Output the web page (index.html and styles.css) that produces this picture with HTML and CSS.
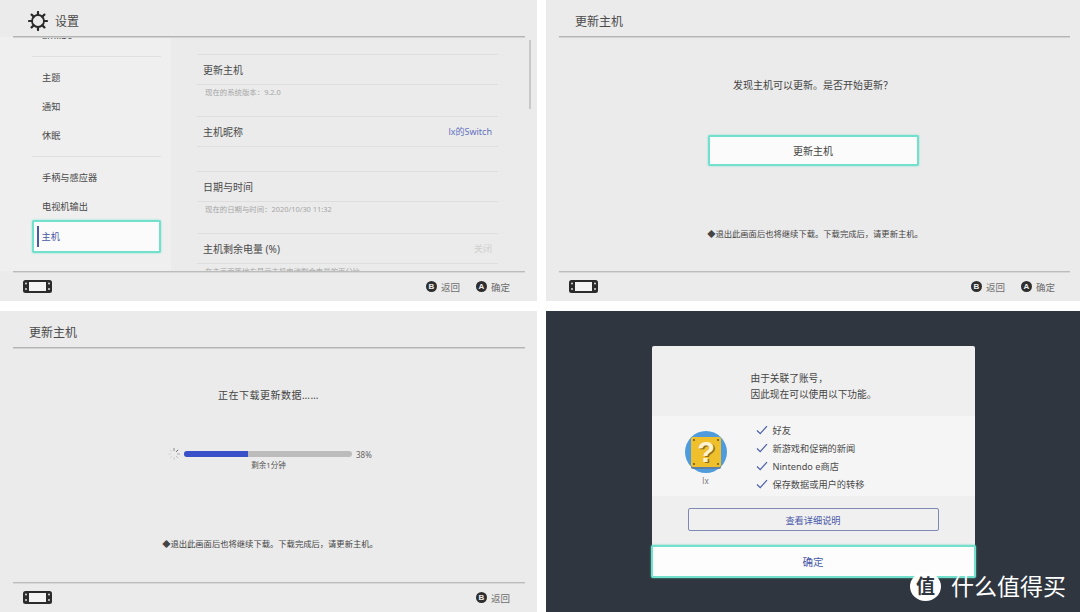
FILE: index.html
```html
<!DOCTYPE html>
<html lang="zh-CN">
<head>
    <meta charset="UTF-8">
    <title>Switch 更新主机</title>
    <link rel="stylesheet" href="styles.css">
</head>
<body>
    <svg class="defs" width="0" height="0">
        <symbol id="console" viewBox="0 0 29 13">
            <rect width="29" height="13" rx="2.5" fill="#2b2b2b"/>
            <rect x="6" y="2" width="17" height="9" fill="#f4f4f4"/>
            <circle cx="3" cy="3.5" r="1" fill="#ddd"/>
            <circle cx="3" cy="9" r="1" fill="#ddd"/>
            <circle cx="26" cy="3.5" r="1" fill="#ddd"/>
            <circle cx="26" cy="9" r="1" fill="#ddd"/>
        </symbol>
        <symbol id="check" viewBox="0 0 12 10">
            <path d="M1 5.5 4.2 8.6 11 1.2" fill="none" stroke="#4a5fa8" stroke-width="1.2"/>
        </symbol>
    </svg>

    <section class="panel settings">
        <header class="panel-head">
            <svg class="gear" viewBox="0 0 20 20">
                <circle cx="10" cy="10" r="6" fill="none" stroke="#2a2a2a" stroke-width="1.8"/>
                <path d="M10 1v3M10 16v3M1 10h3M16 10h3M3.6 3.6l2.2 2.2M14.2 14.2l2.2 2.2M3.6 16.4l2.2-2.2M14.2 5.8l2.2-2.2" stroke="#2a2a2a" stroke-width="2.2" stroke-linecap="round"/>
            </svg>
            <span>设置</span>
        </header>
        <div class="panel-body settings-body">
            <nav class="side">
                <div class="side-item side-cut">amiibo</div>
                <div class="side-group">
                    <div class="side-item">主题</div>
                    <div class="side-item">通知</div>
                    <div class="side-item">休眠</div>
                </div>
                <div class="side-group">
                    <div class="side-item">手柄与感应器</div>
                    <div class="side-item">电视机输出</div>
                    <div class="side-item side-active"><i></i>主机</div>
                </div>
            </nav>
            <div class="options">
                <div class="opt-row">更新主机</div>
                <div class="opt-note">现在的系统版本：9.2.0</div>
                <div class="opt-row opt-gap">主机昵称<span class="opt-value">lx的Switch</span></div>
                <div class="opt-row">日期与时间</div>
                <div class="opt-note">现在的日期与时间：2020/10/30 11:32</div>
                <div class="opt-row">主机剩余电量 (%)<span class="opt-value opt-off">关闭</span></div>
                <div class="opt-note">在主画面等地方显示主机电池剩余电量的百分比</div>
            </div>
            <div class="scrollbar"></div>
        </div>
        <footer class="panel-foot">
            <svg class="console"><use href="#console"/></svg>
            <div class="hints">
                <span class="hint"><b>B</b>返回</span>
                <span class="hint"><b>A</b>确定</span>
            </div>
        </footer>
    </section>

    <section class="panel update-ask">
        <header class="panel-head"><span>更新主机</span></header>
        <div class="panel-body center">
            <p class="msg msg-ask">发现主机可以更新。是否开始更新？</p>
            <button class="focus-btn">更新主机</button>
            <p class="note note-ask">◆退出此画面后也将继续下载。下载完成后，请更新主机。</p>
        </div>
        <footer class="panel-foot">
            <svg class="console"><use href="#console"/></svg>
            <div class="hints">
                <span class="hint"><b>B</b>返回</span>
                <span class="hint"><b>A</b>确定</span>
            </div>
        </footer>
    </section>

    <section class="panel update-run">
        <header class="panel-head"><span>更新主机</span></header>
        <div class="panel-body center">
            <p class="msg msg-run">正在下载更新数据……</p>
            <div class="progress">
                <svg class="spinner" viewBox="0 0 14 14">
                    <path d="M7 1v3" stroke="#8a8a8a"/>
                    <path d="M11.2 2.8 9.1 4.9" stroke="#666"/>
                    <path d="M13 7h-3" stroke="#aaa"/>
                    <path d="M11.2 11.2 9.1 9.1" stroke="#bbb"/>
                    <path d="M7 13v-3" stroke="#ccc"/>
                    <path d="M2.8 11.2l2.1-2.1" stroke="#d2d2d2"/>
                    <path d="M1 7h3" stroke="#d6d6d6"/>
                    <path d="M2.8 2.8l2.1 2.1" stroke="#d0d0d0"/>
                </svg>
                <div class="bar"><div class="bar-fill" style="width: 38%"></div></div>
                <span class="percent">38%</span>
            </div>
            <p class="remain">剩余1分钟</p>
            <p class="note note-run">◆退出此画面后也将继续下载。下载完成后，请更新主机。</p>
        </div>
        <footer class="panel-foot">
            <svg class="console"><use href="#console"/></svg>
            <div class="hints">
                <span class="hint"><b>B</b>返回</span>
            </div>
        </footer>
    </section>

    <section class="panel dark">
        <div class="card">
            <div class="card-intro">
                <p>由于关联了账号，</p>
                <p>因此现在可以使用以下功能。</p>
            </div>
            <div class="card-band">
                <div class="user">
                    <svg class="avatar" viewBox="0 0 42 42">
                        <circle cx="21" cy="21" r="21" fill="#4f9bdc"/>
                        <rect x="6" y="9" width="30" height="29" rx="2" fill="#5f7fa3"/>
                        <rect x="6" y="6" width="30" height="30" rx="2" fill="#f0bf2c"/>
                        <circle cx="9" cy="9" r="1" fill="#6b5320"/>
                        <circle cx="33" cy="9" r="1" fill="#6b5320"/>
                        <circle cx="9" cy="33" r="1" fill="#6b5320"/>
                        <circle cx="33" cy="33" r="1" fill="#6b5320"/>
                        <text class="block-mark-shade" x="22.5" y="32" text-anchor="middle">?</text>
                        <text class="block-mark" x="21" y="31" text-anchor="middle">?</text>
                    </svg>
                    <span class="user-name">lx</span>
                </div>
                <ul class="features">
                    <li><svg class="check"><use href="#check"/></svg>好友</li>
                    <li><svg class="check"><use href="#check"/></svg>新游戏和促销的新闻</li>
                    <li><svg class="check"><use href="#check"/></svg>Nintendo e商店</li>
                    <li><svg class="check"><use href="#check"/></svg>保存数据或用户的转移</li>
                </ul>
            </div>
            <button class="detail-btn">查看详细说明</button>
            <button class="ok-btn">确定</button>
        </div>
        <div class="watermark">
            <span class="wm-badge">值</span>
            <span class="wm-text">什么值得买</span>
        </div>
    </section>
</body>
</html>
```

FILE: styles.css
```css
* {
    box-sizing: border-box;
}

body {
    margin: 0;
    width: 1080px;
    height: 612px;
    overflow: hidden;
    background-color: #fff;
    font-family: "Noto Sans", "Noto Sans CJK SC", sans-serif;
    color: #444;
    display: grid;
    grid-template-columns: 537px 534px;
    grid-template-rows: 301px 301px;
    column-gap: 9px;
    row-gap: 10px;
}

p {
    margin: 0;
}

button {
    display: block;
    font-family: inherit;
    padding: 0;
}

.defs {
    position: absolute;
}

.panel {
    background-color: #ebebeb;
    display: flex;
    flex-direction: column;
    position: relative;
    overflow: hidden;
}

.panel-head {
    height: 37px;
    flex: none;
    margin: 0 12px 0 13px;
    border-bottom: 1px solid #b4b4b4;
    box-shadow: 0 1px 0 #d2d2d2;
    position: relative;
    z-index: 1;
    display: flex;
    align-items: center;
    font-size: 12px;
    color: #4a4a4a;
    padding: 6px 0 0 16px;
}

.panel-body {
    height: 234px;
    flex: none;
    position: relative;
    overflow: hidden;
}

.panel-foot {
    height: 30px;
    flex: none;
    margin: 0 12px 0 13px;
    border-top: 1px solid #bcbcbc;
    box-shadow: inset 0 1px 0 #d8d8d8;
    display: flex;
    align-items: center;
    justify-content: space-between;
    padding: 0 15px 0 10px;
}

.console {
    width: 29px;
    height: 13px;
}

.hints {
    display: flex;
    gap: 16px;
}

.hint {
    display: flex;
    align-items: center;
    gap: 4px;
    font-size: 9.5px;
    color: #6e6e6e;
}

.hint b {
    width: 11px;
    height: 11px;
    border-radius: 50%;
    background-color: #2e2e2e;
    color: #eee;
    font: bold 8px/11px "Liberation Sans", sans-serif;
    text-align: center;
}

/* settings */
.settings .panel-head {
    padding-left: 15px;
}

.gear {
    width: 20px;
    height: 20px;
    margin-right: 7px;
}

.settings-body {
    display: flex;
    background-color: #ebebeb;
}

.side {
    width: 171px;
    flex: none;
    background-color: #efefef;
    padding-left: 32px;
    padding-right: 10px;
    margin-top: -16px;
}

.side-item {
    height: 29px;
    line-height: 29px;
    font-size: 9.2px;
    padding-left: 10px;
    color: #4a4a4a;
    position: relative;
}

.side-cut {
    height: 35px;
    font-size: 9.5px;
}

.side-group {
    border-top: 1px solid #e0e0e0;
    padding-top: 6px;
    padding-bottom: 6px;
}

.side-active {
    height: 33px;
    line-height: 29px;
    margin-top: -1px;
    background-color: #fbfbfb;
    border: 2.5px solid #72e0cd;
    border-radius: 2px;
    box-shadow: 0 0 2px #72e0cd;
    padding-left: 7.5px;
    color: #4a58a8;
}

.side-active i {
    position: absolute;
    left: 2.5px;
    top: 3.5px;
    width: 2px;
    height: 21px;
    background-color: #4a58a8;
}

.options {
    width: 301px;
    margin-left: 26px;
    margin-top: 17px;
}

.opt-row {
    height: 31px;
    border-top: 1px solid #dedede;
    border-bottom: 1px solid #dedede;
    display: flex;
    align-items: center;
    justify-content: space-between;
    font-size: 10px;
    color: #4a4a4a;
    padding: 0 6px;
}

.opt-gap {
    margin-bottom: 24px;
}

.opt-value {
    font-size: 9px;
    color: #6271c0;
}

.opt-off {
    color: #cfcfcf;
}

.opt-note {
    height: 31px;
    font-size: 7.4px;
    line-height: 14px;
    color: #a6a6a6;
    padding-left: 8px;
}

.scrollbar {
    position: absolute;
    left: 529px;
    top: 3px;
    width: 2px;
    height: 69px;
    background-color: #c8c8c8;
}

/* update screens */
.center {
    display: flex;
    flex-direction: column;
    align-items: center;
}

.update-ask .panel-foot,
.update-ask .panel-head {
    margin-right: 10px;
}

.msg {
    height: 22px;
    line-height: 22px;
    font-size: 10px;
    color: #444;
}

.msg-ask {
    margin-top: 37px;
}

.msg-run {
    margin-top: 36px;
    letter-spacing: 0.5px;
}

.focus-btn {
    width: 211px;
    height: 31px;
    margin-top: 39px;
    background-color: #fbfbfb;
    border: 2.5px solid #72e0cd;
    border-radius: 2px;
    box-shadow: 0 0 2px #72e0cd;
    font-size: 10px;
    color: #444;
}

.note {
    height: 14px;
    line-height: 14px;
    font-size: 8.3px;
    color: #444;
}

.note-ask {
    margin-top: 61px;
    margin-left: 4px;
}

.note-run {
    margin-top: 68px;
    margin-left: 3px;
}

.progress {
    margin-top: 41px;
    height: 14px;
    display: flex;
    align-items: center;
    margin-left: 6px;
}

.spinner {
    width: 14px;
    height: 14px;
    margin-right: 3px;
    stroke-width: 1;
}

.bar {
    width: 168px;
    height: 6px;
    border-radius: 3px;
    background-color: #bcbcbc;
    overflow: hidden;
}

.bar-fill {
    height: 100%;
    background-color: #3a50c8;
}

.percent {
    width: 20px;
    margin-left: 4px;
    font-size: 8px;
    color: #666;
}

.remain {
    height: 8px;
    line-height: 8px;
    font-size: 7.5px;
    color: #555;
}

/* account dialog */
.dark {
    background-color: #2f3640;
    padding-top: 35px;
    align-items: center;
}

.card {
    width: 323px;
    height: 232px;
    flex: none;
    background-color: #efefef;
    border-radius: 2px;
}

.card-intro {
    height: 70px;
    padding: 25px 0 0 99px;
    font-size: 9.7px;
    line-height: 16px;
    color: #444;
}

.card-band {
    height: 80px;
    background-color: #f5f5f6;
    display: flex;
}

.user {
    width: 42px;
    margin-left: 33px;
    margin-right: 29px;
    padding-top: 15px;
    display: flex;
    flex-direction: column;
    align-items: center;
}

.avatar {
    width: 42px;
    height: 42px;
    flex: none;
}

.block-mark,
.block-mark-shade {
    font: bold 29px "Liberation Sans", sans-serif;
}

.block-mark {
    fill: #fff3d0;
}

.block-mark-shade {
    fill: #8f6c1f;
}

.user-name {
    margin-top: 1px;
    font-size: 8px;
    line-height: 14px;
    color: #777;
}

.features {
    list-style: none;
    margin: 0;
    padding: 5px 0 0;
}

.features li {
    height: 18px;
    display: flex;
    align-items: center;
    font-size: 9.2px;
    color: #4a4a4a;
}

.check {
    width: 12px;
    height: 10px;
    margin-right: 5px;
}

.detail-btn {
    width: 251px;
    height: 23px;
    margin: 12px 0 0 36px;
    background-color: #f0f0f0;
    border: 1.5px solid #8088b4;
    border-radius: 2px;
    font-size: 9.2px;
    color: #4a58a8;
}

.ok-btn {
    width: 325px;
    height: 33px;
    margin: 14px 0 0 -1px;
    background-color: #fdfdfd;
    border: 2px solid #72e0cd;
    border-radius: 2px;
    box-shadow: 0 0 2px #4fc9b4;
    font-size: 10.5px;
    color: #4a58a8;
    position: relative;
}

.watermark {
    position: absolute;
    left: 364px;
    top: 261px;
    display: flex;
    align-items: center;
    gap: 10px;
}

.wm-badge {
    width: 31px;
    height: 29px;
    border-radius: 50%;
    background-color: #fff;
    color: #2f3640;
    font-size: 19px;
    line-height: 28px;
    font-weight: 700;
    text-align: center;
}

.wm-text {
    font-size: 23px;
    line-height: 29px;
    color: #fff;
}
```
